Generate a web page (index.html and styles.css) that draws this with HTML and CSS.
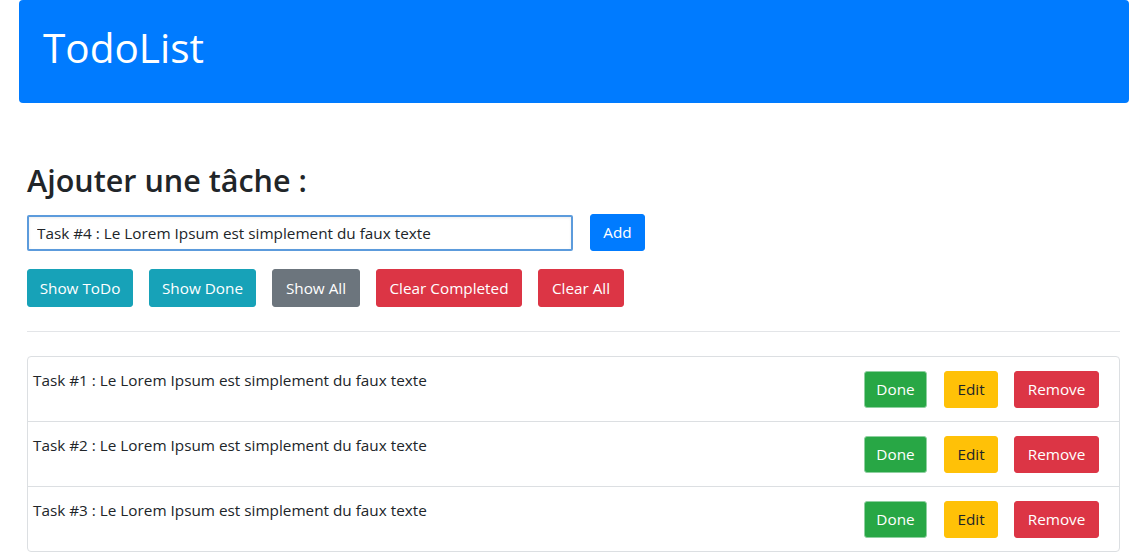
FILE: index.html
```html
<!DOCTYPE html>
<html lang="fr">
<head>
<meta charset="utf-8">
<title>TodoList</title>
<link rel="stylesheet" href="styles.css">
</head>
<body>
<div class="page">
  <header class="jumbotron">
    <h1 class="brand">TodoList</h1>
  </header>
  <main class="content">
    <h2 class="section-title">Ajouter une tâche :</h2>
    <div class="add-row">
      <input class="task-input" type="text" value="Task #4 : Le Lorem Ipsum est simplement du faux texte">
      <button class="btn btn-primary btn-add">Add</button>
    </div>
    <div class="filter-row">
      <button class="btn btn-info w-todo">Show ToDo</button>
      <button class="btn btn-info w-done">Show Done</button>
      <button class="btn btn-secondary w-all">Show All</button>
      <button class="btn btn-danger w-clearc">Clear Completed</button>
      <button class="btn btn-danger w-cleara">Clear All</button>
    </div>
    <hr class="divider">
    <ul class="task-list">
      <li class="task">
        <span class="task-text">Task #1 : Le Lorem Ipsum est simplement du faux texte</span>
        <div class="task-actions">
          <button class="btn btn-success w-d">Done</button>
          <button class="btn btn-warning w-e">Edit</button>
          <button class="btn btn-danger w-r">Remove</button>
        </div>
      </li>
      <li class="task">
        <span class="task-text">Task #2 : Le Lorem Ipsum est simplement du faux texte</span>
        <div class="task-actions">
          <button class="btn btn-success w-d">Done</button>
          <button class="btn btn-warning w-e">Edit</button>
          <button class="btn btn-danger w-r">Remove</button>
        </div>
      </li>
      <li class="task">
        <span class="task-text">Task #3 : Le Lorem Ipsum est simplement du faux texte</span>
        <div class="task-actions">
          <button class="btn btn-success w-d">Done</button>
          <button class="btn btn-warning w-e">Edit</button>
          <button class="btn btn-danger w-r">Remove</button>
        </div>
      </li>
    </ul>
  </main>
</div>
</body>
</html>
```
FILE: styles.css
```css
* { box-sizing: border-box; }
html, body { margin: 0; padding: 0; background: #fff; }
body {
  font-family: "Open Sans", "Noto Sans", sans-serif;
  font-size: 15.3px;
  line-height: 1.6;
  color: #212529;
}
.page { padding: 0 19px; }
.jumbotron {
  background: #007bff;
  height: 103px;
  border-radius: 4px;
  padding: 0 24px;
  display: flex;
  align-items: center;
}
.brand {
  margin: 0;
  color: #fff;
  font-size: 40.5px;
  font-weight: 400;
  line-height: 1.2;
  padding-bottom: 6px;
}
.content { padding: 0 9px 0 8px; }
.section-title {
  margin: 58px 0 0;
  font-size: 30.5px;
  font-weight: 600;
  line-height: 1.25;
}
.add-row {
  display: flex;
  align-items: center;
  gap: 17px;
  margin-top: 15px;
}
.task-input {
  width: 546px;
  height: 36px;
  border: 2px solid #5c9bdc;
  border-radius: 2px;
  padding: 0 8px;
  font: inherit;
  color: #212529;
  box-shadow: inset 0 1px 3px rgba(0,0,0,0.08);
  outline: none;
}
.btn {
  font: inherit;
  font-size: 15.3px;
  line-height: 1.5;
  border: 1px solid transparent;
  border-radius: 3px;
  padding: 5px 0;
  height: 38px;
  text-align: center;
  color: #fff;
  cursor: pointer;
}
.btn-primary { background: #007bff; border-color: #007bff; }
.btn-info { background: #17a2b8; border-color: #17a2b8; }
.btn-secondary { background: #6c757d; border-color: #6c757d; }
.btn-danger { background: #dc3545; border-color: #dc3545; }
.btn-success { background: #28a745; border-color: #8fd0a0; }
.btn-warning { background: #ffc107; border-color: #ffc107; color: #212529; }
.btn-add { width: 55px; height: 37px; }
.filter-row {
  display: flex;
  gap: 16px;
  margin-top: 18px;
}
.w-todo { width: 106px; }
.w-done { width: 107px; }
.w-all { width: 88px; }
.w-clearc { width: 146px; }
.w-cleara { width: 86px; }
.divider {
  margin: 24px 0 0;
  border: 0;
  border-top: 1px solid #e3e5e8;
}
.task-list {
  list-style: none;
  margin: 24px 0 0;
  padding: 0;
  border: 1px solid #dcdfe2;
  border-radius: 4px;
}
.task {
  display: flex;
  justify-content: space-between;
  align-items: flex-start;
  height: 65px;
  padding: 11px 20px 0 5px;
  border-top: 1px solid #dcdfe2;
}
.task:first-child { border-top: 0; height: 64px; }
.task-text { line-height: 24px; }
.task-actions {
  display: flex;
  gap: 17px;
  padding-top: 3px;
}
.task-actions .btn { height: 37px; }
.w-d { width: 63px; }
.w-e { width: 54px; margin-right: -1px; }
.w-r { width: 85px; }
```
